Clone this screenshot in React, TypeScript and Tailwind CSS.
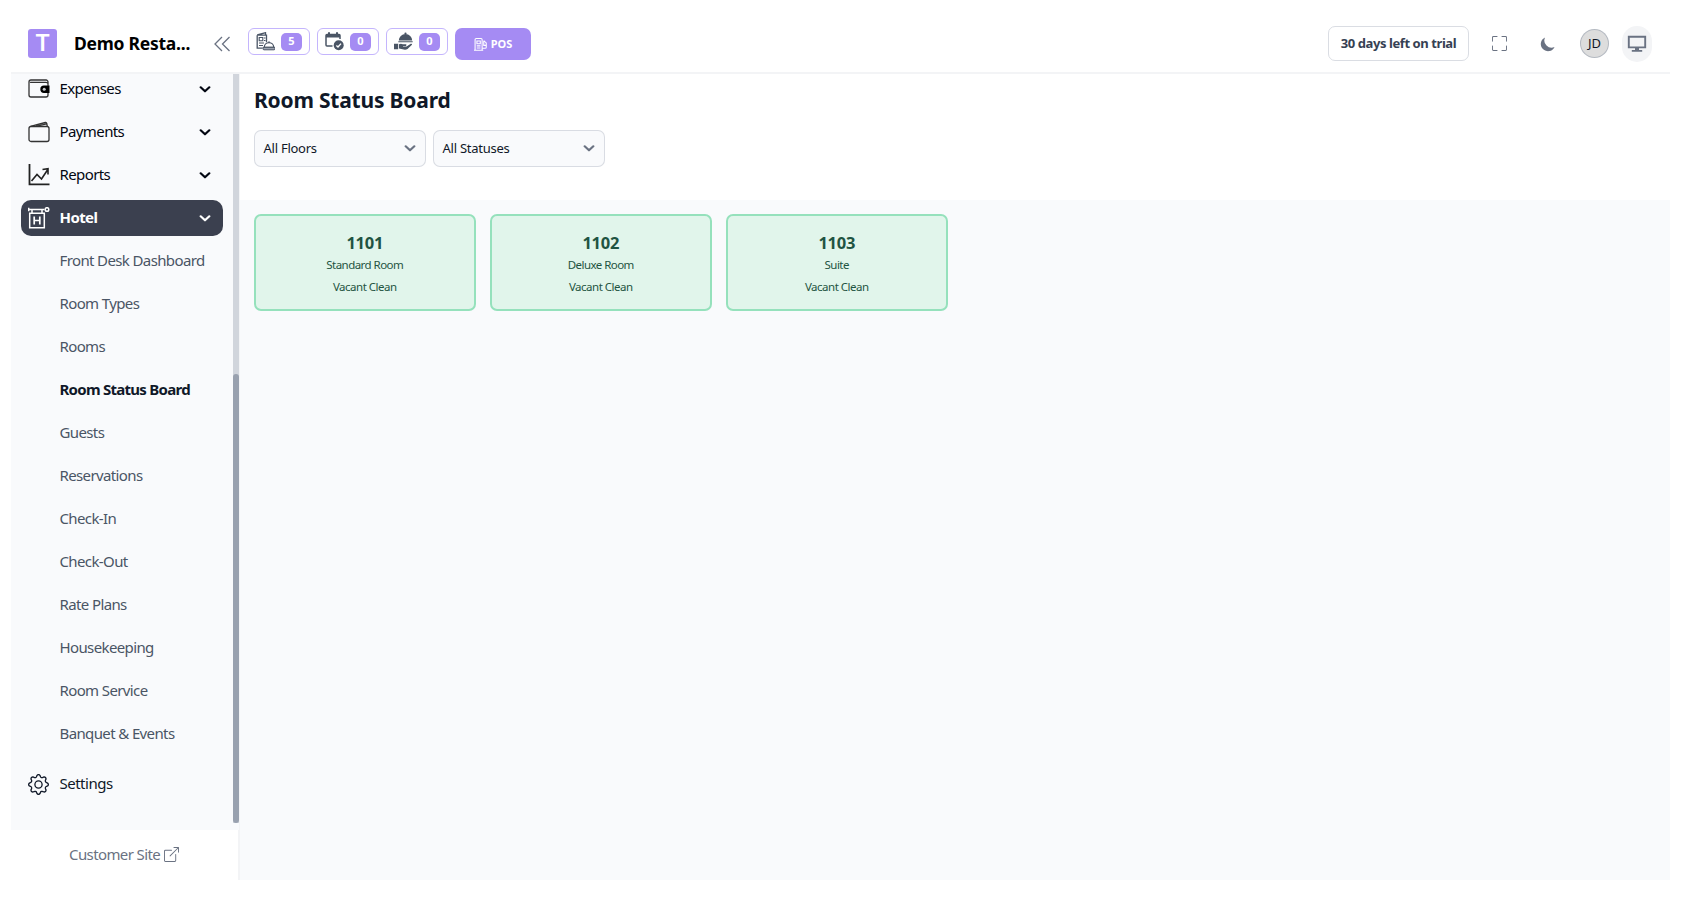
import React from "react";
import { BsBoxArrowUpRight, BsFullscreen, BsGear } from "react-icons/bs";
import { HiMoon } from "react-icons/hi";

const hotelLinks = [
  "Front Desk Dashboard",
  "Room Types",
  "Rooms",
  "Room Status Board",
  "Guests",
  "Reservations",
  "Check-In",
  "Check-Out",
  "Rate Plans",
  "Housekeeping",
  "Room Service",
  "Banquet & Events",
];

const rooms = [
  { number: "1101", type: "Standard Room", status: "Vacant Clean" },
  { number: "1102", type: "Deluxe Room", status: "Vacant Clean" },
  { number: "1103", type: "Suite", status: "Vacant Clean" },
];

function ExpensesIcon() {
  return (
    <svg className="h-[22px] w-[22px]" viewBox="0 0 22 22" fill="none">
      <path
        d="M20 7.500V4a2 2 0 0 0-2-2H3a2 2 0 0 0-2 2v13a2 2 0 0 0 2 2h15a2 2 0 0 0 2-2v-2M2.500 4.300H18q1.500 0 2 1.200"
        stroke="#333"
        strokeWidth="1.300"
        strokeLinecap="round"
      />
      <path d="M21.500 7.500h-5.500a3.700 3.700 0 0 0 0 7.400h5.500z" fill="#000" />
      <circle cx="16.200" cy="11.200" r="1.500" fill="#c4c6c9" />
    </svg>
  );
}

function PaymentsIcon() {
  return (
    <svg
      className="h-[22px] w-[22px]"
      viewBox="0 0 22 22"
      fill="none"
      stroke="#333"
      strokeWidth="1.300"
      strokeLinejoin="round"
    >
      <rect x="1" y="5.500" width="20" height="15" rx="2" />
      <path d="m2.500 5.300 14.800-3.800q1.200-.2 1.500 1l.5 2.800M8 5.300l10.500-2.500" />
    </svg>
  );
}

function ReportsIcon() {
  return (
    <svg className="h-[22px] w-[22px]" viewBox="0 0 22 22" fill="none" stroke="#222">
      <path d="M1.500 0v20.300H21.500" strokeWidth="1.800" />
      <path d="m3.500 17 5.500-6.500 4.500 4.500 6.300-9.500M14.500 5.500l5.500-.8v5.800" strokeWidth="1.600" />
    </svg>
  );
}

function HotelIcon() {
  return (
    <svg
      className="h-[22px] w-[22px]"
      viewBox="0 0 22 22"
      fill="none"
      stroke="currentColor"
      strokeWidth="1.500"
    >
      <path d="M0 2.500h16.500M0.700 0.800v3.400M4 2.500v4M14 2.500v4" />
      <circle cx="19" cy="2.500" r="1.800" />
      <path d="M1.700 6.300h14.600v14.500H1.700z" />
      <path d="M6.200 9.500v8M11.800 9.500v8M6.200 13.500h5.600" strokeWidth="1.700" />
    </svg>
  );
}

function OrdersIcon() {
  return (
    <svg className="h-[19px] w-[19px] text-gray-600" viewBox="0 0 19 19" fill="none">
      <path d="M1.200 3.200h9.300v7M1.200 3.200v13h5.300M1.200 3l8.300-2.300v2" stroke="currentColor" strokeWidth="1.300" />
      <path d="M3.200 5.500h3.600v3.300H3.200z" stroke="currentColor" strokeWidth="1.100" />
      <path d="M8 6h1.500M8 8.500h1.500M3 11h5M3 13.500h4" stroke="currentColor" strokeWidth="1.100" />
      <path d="M8.300 15.300a4.700 4.700 0 0 1 9.400 0z" fill="#fff" stroke="currentColor" strokeWidth="1.200" />
      <path d="M13 10.500V9.200M7 15.300h12v1.500q0 1-1 1H8q-1 0-1-1z" fill="#9ca3af" stroke="currentColor" />
    </svg>
  );
}

function ReservationIcon() {
  return (
    <svg className="h-[19px] w-[19px] text-gray-600" viewBox="0 0 19 19" fill="none">
      <path d="M15 7V3.500a1 1 0 0 0-1-1H2a1 1 0 0 0-1 1V13a1 1 0 0 0 1 1h5.500" stroke="currentColor" strokeWidth="1.500" />
      <path d="M1 2.500h14v3H1z" fill="currentColor" />
      <path d="M4 .3v3.500M12 .3v3.500" stroke="currentColor" strokeWidth="2" />
      <circle cx="13.700" cy="13.200" r="5" fill="currentColor" />
      <path d="m11.400 13.400 1.600 1.500 3-3.300" stroke="#fff" strokeWidth="1.400" />
    </svg>
  );
}

function WaiterIcon() {
  return (
    <svg className="h-[19px] w-[19px] text-gray-600" viewBox="0 0 19 19" fill="currentColor">
      <path d="M4.800 8.500a6.700 6.500 0 0 1 13.400 0zM4.300 9.300h14.400v1H4.300z" />
      <circle cx="11.500" cy="1.500" r="1.100" />
      <path d="M0 11.800h4.200v5.400H0zM5 12.300q2-1.200 3.800 0h3.300q1 .9-.2 1.600H9v.7h3.500l4.300-2.800q1.500-.3 1.200 1l-4.500 4.200q-1 .7-2.500.7L5 16.500z" />
    </svg>
  );
}

function PosIcon() {
  return (
    <svg className="h-[13px] w-[13px]" viewBox="0 0 12 12" fill="none" stroke="currentColor" strokeWidth="1">
      <path d="M1 11V1.500a1 1 0 0 1 1-1h4.500a1 1 0 0 1 1 1V11M0 11.300h8.500M2.700 2.700h3.100v2.600H2.700zM2.500 7.300H6M2.500 9.200H6" />
      <path d="M7.500 9.500h2.800q1 0 1-1V4.500L9 2.500M9 2.500v4.300h2" />
    </svg>
  );
}

function MonitorIcon() {
  return (
    <svg className="h-[18px] w-5 text-gray-500" viewBox="0 0 20 18" fill="none">
      <path d="M1.800 1.800h16.400v10.600H1.800z" stroke="currentColor" strokeWidth="1.900" />
      <path d="M8 12.500h4v2.700H8zM4.800 15h10.400v1.700H4.800z" fill="currentColor" />
    </svg>
  );
}

function Chevron() {
  return (
    <svg className="h-[7px] w-3" viewBox="0 0 12 7" fill="none">
      <path
        d="m1.700 1.300 4.300 4 4.300-4"
        stroke="currentColor"
        strokeWidth="2.200"
        strokeLinecap="round"
        strokeLinejoin="round"
      />
    </svg>
  );
}

interface NavItemProps {
  label: string;
  icon: React.ReactNode;
  active?: boolean;
}

function NavItem({ label, icon, active }: NavItemProps) {
  return (
    <div
      className={`flex h-9 shrink-0 items-center rounded-[10px] pr-3 pl-[7px] ${
        active ? "bg-[#3b404f] font-bold text-white" : "text-gray-950"
      }`}
    >
      <span className="flex w-[22px]">{icon}</span>
      <span className="ml-2.5 flex-1 pb-px text-[15px] tracking-[-0.6px]">{label}</span>
      <Chevron />
    </div>
  );
}

interface CounterProps {
  icon: React.ReactNode;
  count: number;
}

function Counter({ icon, count }: CounterProps) {
  return (
    <div className="flex h-[27px] w-[62px] items-center justify-between rounded-[6px] border border-[#c4b5fd] pr-[7px] pl-[7px]">
      {icon}
      <span className="flex h-[18px] w-[21px] items-center justify-center rounded-[5px] bg-[#a58bf3] text-[11px] font-bold text-white">
        {count}
      </span>
    </div>
  );
}

function Select({ label }: { label: string }) {
  return (
    <button className="flex h-[37px] w-[172px] items-center justify-between rounded-[7px] border border-gray-300/80 bg-[#f9fafc] pr-[9px] pl-[8.5px] text-[13px] tracking-[-0.25px] text-gray-900">
      {label}
      <span className="text-gray-500">
        <Chevron />
      </span>
    </button>
  );
}

function Header() {
  return (
    <header className="flex h-[74px] shrink-0 border-b-2 border-gray-100">
      <div className="flex w-[237px] items-center pt-[15px] pl-[17px]">
        <div className="flex h-[29px] w-[29px] items-center justify-center rounded-[3px] bg-[#a58bf3] font-[Inter] text-[23px] font-semibold text-white">
          T
        </div>
        <span className="ml-[17px] w-[140px] text-[17.5px] font-bold tracking-[-0.25px] whitespace-nowrap text-black">
          Demo Resta...
        </span>
        <svg className="h-4 w-4 shrink-0 text-gray-500" viewBox="0 0 16 16" fill="none" stroke="currentColor" strokeWidth="1.300">
          <path d="M8 1 1 8l7 7M15.500 1l-7 7 7 7" />
        </svg>
      </div>
      <div className="flex flex-1 items-start gap-[7px] pt-7">
        <Counter icon={<OrdersIcon />} count={5} />
        <Counter icon={<ReservationIcon />} count={0} />
        <Counter icon={<WaiterIcon />} count={0} />
        <button className="flex h-8 w-[76px] items-center justify-center gap-1 rounded-[7px] bg-[#a58bf3] text-[11px] font-bold text-white">
          <PosIcon />
          POS
        </button>
      </div>
      <div className="flex items-center pt-[15px] pr-[18px]">
        <button className="h-[35px] w-[141px] rounded-[7px] border border-gray-300/80 text-[13px] font-bold tracking-[-0.42px] whitespace-nowrap text-gray-700">
          30 days left on trial
        </button>
        <BsFullscreen className="ml-[23px] h-[15px] w-[15px] text-gray-500" />
        <HiMoon className="ml-8 h-[18px] w-[18px] text-gray-500" />
        <div className="ml-[23px] flex h-[29px] w-[29px] items-center justify-center rounded-full border border-gray-400/60 bg-[#dddddd] text-[13px] tracking-[-0.1px] text-gray-900">
          JD
        </div>
        <div className="ml-[13px] flex h-9 w-[30px] items-center justify-center rounded-full bg-gray-100">
          <MonitorIcon />
        </div>
      </div>
    </header>
  );
}

function Sidebar() {
  return (
    <aside className="flex w-[229px] shrink-0 flex-col">
      <div className="flex h-[756px] bg-[#f9fafc]">
        <nav className="-mt-[3px] flex w-[222px] flex-col gap-[7px] pr-2.5 pl-[9.5px]">
          <NavItem label="Expenses" icon={<ExpensesIcon />} />
          <NavItem label="Payments" icon={<PaymentsIcon />} />
          <NavItem label="Reports" icon={<ReportsIcon />} />
          <NavItem label="Hotel" icon={<HotelIcon />} active />
          {hotelLinks.map((link) => (
            <a
              key={link}
              className={`flex h-9 shrink-0 items-center pb-px pl-[39px] text-[15px] whitespace-nowrap ${
                link === "Room Status Board"
                  ? "font-bold tracking-[-0.73px] text-gray-900"
                  : "tracking-[-0.62px] text-gray-600"
              }`}
            >
              {link}
            </a>
          ))}
          <div className="mt-[7px] flex h-9 shrink-0 items-center pl-[7px] text-gray-900">
            <BsGear className="h-[21px] w-[21px]" />
            <span className="ml-[11px] pb-px text-[15px] tracking-[-0.5px]">Settings</span>
          </div>
        </nav>
        <div className="h-[749px] w-1.5 shrink-0 bg-gray-300 pt-[300px]">
          <div className="h-[449px] rounded-full bg-gray-400" />
        </div>
        <div className="flex-1 bg-gray-100" />
      </div>
      <div className="flex h-[50px] items-center gap-1 border-r-2 border-gray-100 pb-px pl-[58px] text-[15px] tracking-[-0.6px] text-gray-500">
        Customer Site
        <BsBoxArrowUpRight className="h-[15px] w-[15px]" />
      </div>
    </aside>
  );
}

function App() {
  return (
    <div className="h-[904px] w-[1708px] overflow-hidden bg-white pr-[38px] pl-[11px] font-['Noto_Sans',sans-serif]">
      <Header />
      <div className="flex h-[806px]">
        <Sidebar />
        <main className="flex flex-1 flex-col bg-[#f9fafc]">
          <div className="h-[126px] bg-white px-[14px] pt-[11px]">
            <h1 className="text-[21px] leading-[30px] font-bold tracking-[-0.2px] text-gray-900">
              Room Status Board
            </h1>
            <div className="mt-[15px] flex gap-[7px]">
              <Select label="All Floors" />
              <Select label="All Statuses" />
            </div>
          </div>
          <div className="flex gap-[14.500px] px-[14px] pt-[14px]">
            {rooms.map((room) => (
              <div
                key={room.number}
                className="flex h-[97px] w-[221.500px] flex-col items-center rounded-[7px] border-2 border-[#95e1bc] bg-[#e1f5eb] pt-[14px] text-[#1f5442]"
              >
                <span className="text-[16.5px] leading-[25px] font-bold tracking-[-0.3px]">
                  {room.number}
                </span>
                <span className="text-[11.5px] leading-[20px] tracking-[-0.55px]">{room.type}</span>
                <span className="mt-0.5 text-[11.5px] leading-[20px] tracking-[-0.5px]">
                  {room.status}
                </span>
              </div>
            ))}
          </div>
        </main>
      </div>
    </div>
  );
}

export default App;
